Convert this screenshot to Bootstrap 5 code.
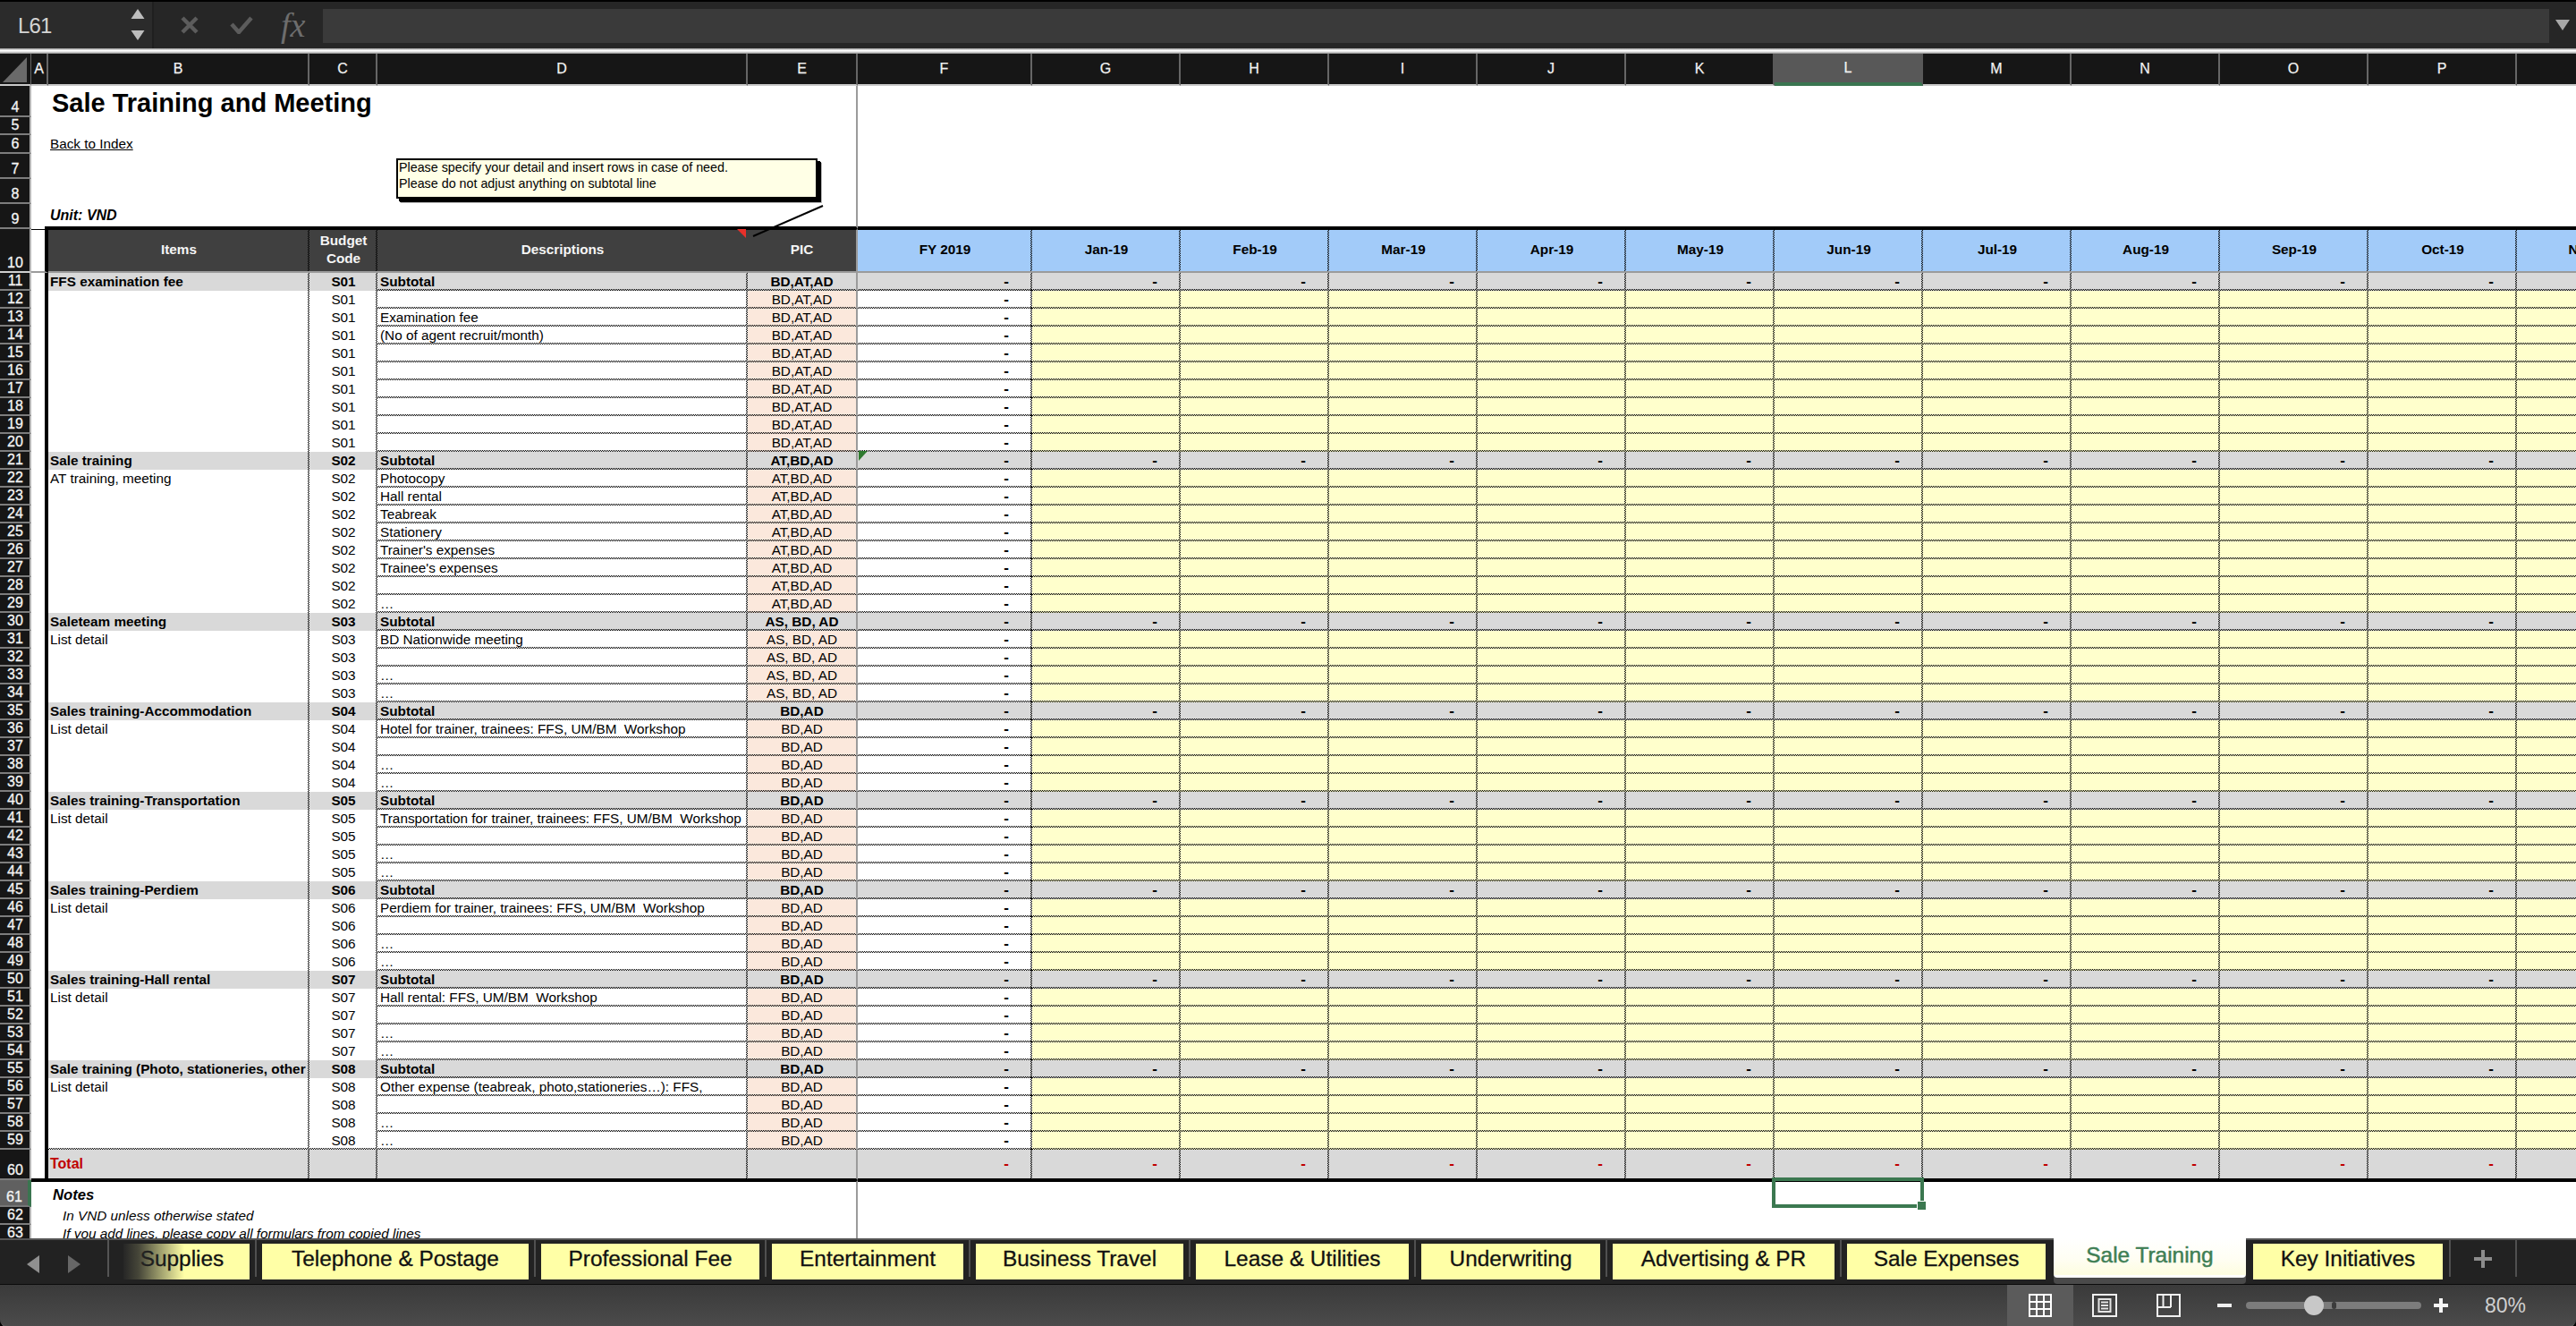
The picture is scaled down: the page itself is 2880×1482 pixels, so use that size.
<!DOCTYPE html>
<html lang="en">
<head>
<meta charset="utf-8">
<title>Sale Training</title>
<link href="https://cdn.jsdelivr.net/npm/bootstrap@5.3.0/dist/css/bootstrap.min.css" rel="stylesheet">
<style>
html,body{height:100%;margin:0;background:#000;overflow:hidden}
.xl-app{width:2880px;height:1482px;display:flex;flex-direction:column;font-family:"Liberation Sans",Arial,sans-serif;position:relative;overflow:hidden}
/* formula bar */
.xl-fbar{flex:0 0 52px;margin-top:2px;background:#262626;display:flex;align-items:stretch}
.xl-name{flex:0 0 170px;display:flex;align-items:center;justify-content:space-between;padding:0 8px 0 20px;background:#2b2b2b;color:#d4d4d4;font-size:24px;font-family:"Liberation Sans",sans-serif;letter-spacing:-.8px}
.xl-name span{padding-top:2px}
.xl-split{flex:0 0 2px;background:#1f1f1f}
.xl-ficons{flex:0 0 189px;display:flex;align-items:center;position:relative}
.xl-ficons svg{display:block}
.xl-fx{font-family:"Liberation Serif",serif;font-style:italic;font-size:38px;color:#6d6d6d;line-height:1}
.xl-finput{flex:1 1 auto;margin:8px 0 6px 0;background:#3a3a3a}
.xl-fdrop{flex:0 0 30px;display:flex;align-items:center;justify-content:center}
.xl-rule{flex:0 0 6px;background:linear-gradient(#8d8d8d,#fff 40%,#e0e0e0 65%,#8a8a8a)}
/* sheet */
.xl-sheet{flex:0 0 1324px;background:#fff;overflow:hidden;position:relative}
.xl-grid{table-layout:fixed;width:2980px;border-collapse:separate;border-spacing:0;font-size:15.3px;line-height:20px;color:#000}
.xl-grid td,.xl-grid th{padding:0;white-space:nowrap;overflow:hidden;vertical-align:bottom;font-weight:400}
.c-r{width:35px}.c-a{width:19px}.c-b{width:292px}.c-c{width:76px}.c-d{width:414px}.c-e{width:123px}.c-f{width:195px}.c-m{width:166px}
.xl-grid thead th{height:36px;background:#161616;color:#f2f2f2;font-size:16px;-webkit-text-stroke:.25px #f2f2f2;text-align:center;vertical-align:middle;border-right:2px solid #666;border-bottom:2px solid #c9c9c9}
.xl-grid thead th.xl-corner{border-right:1px solid #666;background:#161616}
.xl-grid thead th.xl-cur{background:#585858;border-bottom:4px solid #3a7550;border-right-color:#585858}
.xl-grid thead th.xl-prev{border-right-color:#585858}
.xl-grid tbody th{background:#161616;color:#f4f4f4;font-size:16px;-webkit-text-stroke:.3px #f4f4f4;text-align:center;line-height:18px;border-bottom:2px solid #7d7d7d;border-right:2px solid #b5b5b5;padding-left:1px}
.xl-grid tbody th.xl-curr{background:#606060;border-right:4px solid #3a7550;border-bottom-color:#777}
.xl-corner svg{display:block}
.r4{height:35px}.r5,.r6{height:20px}.r7,.r8{height:28px}.r9{height:28px}.r10{height:49px}.r-d{height:20px}.r60{height:34px}.r61{height:30px}
.xl-grid td.xl-pane{border-right:2px solid #9b9b9b}
.xl-grid td.xl-title{font-weight:700;font-size:29px;line-height:32px;padding:0 0 0 4px;overflow:visible}
.xl-grid td.xl-link{padding-left:2px;padding-bottom:1px}
td.xl-link a{color:#000;text-decoration:underline}
.xl-grid td.xl-unit{font-weight:700;font-style:italic;font-size:16px;padding:0 0 2px 2px;vertical-align:bottom}
tr.r9 td{border-bottom:3px solid #000}
tr.r9 td.xl-na{border-bottom:0;background:linear-gradient(#000,#000) right bottom/4px 3px no-repeat}
.xl-grid tr.r10 td{border-top:1px solid #000;border-bottom:2px solid #9b9b9b;text-align:center;vertical-align:middle;font-weight:700;line-height:20px;font-size:15.3px;padding-bottom:2px}
.xl-grid tr.r10 th{border-bottom:2px solid #d0d0d0}
.xl-dk{background-color:#404040;color:#f5f5f5}
.xl-bl{background-color:#a2cbf9}
.xl-grid td.xl-left{border-right:4px solid #000}
/* 1px checkered hair lines */
.xl-v{background-image:repeating-conic-gradient(#000 0 25%,transparent 0 50%);background-size:2px 2px;background-repeat:repeat-y;background-position:right top}
.xl-h{background-image:repeating-conic-gradient(#000 0 25%,transparent 0 50%);background-size:2px 2px;background-repeat:repeat-x;background-position:left bottom}
.xl-vh{background-image:repeating-conic-gradient(#000 0 25%,transparent 0 50%),repeating-conic-gradient(#000 0 25%,transparent 0 50%);background-size:2px 2px,2px 2px;background-repeat:repeat-y,repeat-x;background-position:right top,left bottom}
.f-gr{background-color:#d9d9d9}
.f-ye{background-color:#ffffcc}
.f-pe{background-color:#fbe8dc}
.f-wh{background-color:#fff}
.xl-grid td.t-b{font-weight:700}
.xl-grid td.t-i{padding-left:2px}
.xl-grid td.t-c{text-align:center}
.xl-grid td.t-d{padding-left:3px}
.xl-grid td.t-e{text-align:center}
.xl-grid td.t-n{text-align:right;padding-right:26px;font-weight:700;font-size:17px}
.xl-grid tr.r60 td{vertical-align:middle;border-bottom:2px solid #000}
.xl-grid tr.r61 td{border-top:2px solid #000}
.xl-grid td.xl-total{color:#c00000;font-weight:700;font-size:16px;padding-left:2px}
.xl-grid tr.r60 td.t-n{color:#c00000}
.xl-grid td.xl-notes{font-weight:700;font-style:italic;font-size:16.7px;padding:0 0 3px 5px;overflow:visible}
.xl-grid td.xl-note{font-style:italic;padding:0 0 1px 16px;line-height:19px;overflow:visible;font-size:15.3px}
/* overlays */
.xl-callout{position:absolute;left:443px;top:117px;width:471px;height:45px;background:#ffffe6;border:2px solid #000;box-shadow:3px 3px 0 #000,4px 4px 0 #000,5px 5px 0 #bbb;font-size:14.3px;line-height:18px;padding:0 0 0 1px;color:#000}
.xl-callout div{margin-top:-1px}
.xl-marks{position:absolute;left:0;top:0;width:2880px;height:1324px;pointer-events:none}
.xl-sel{position:absolute;left:1981px;top:1256px;width:170px;height:34px;border:4px solid #3b7850;background:transparent}
.xl-sel::after{content:"";position:absolute;right:-7px;bottom:-7px;width:11px;height:11px;background:#3b7850;border:1px solid #fff}
/* tabs */
.xl-tabs{flex:0 0 52px;background:#222;border-top:2px solid #555;border-bottom:1px solid #0b0b0b;display:flex;align-items:flex-start;position:relative}
.xl-nav{flex:0 0 138px;height:41px;display:flex;align-items:center;position:relative}
.xl-nav::after{content:"";position:absolute;left:120px;top:0;bottom:0;width:2px;background:#555}
.xl-nav svg{position:absolute;top:17px}
.xl-nav .n1{left:29px}.xl-nav .n2{left:75px}
.xl-tab{flex:0 0 auto;height:40px;margin:4px 14px 0 0;background:#ffffa6;color:#111;font-size:24.4px;-webkit-text-stroke:.3px currentColor;line-height:34px;text-align:center;position:relative;white-space:nowrap}
.xl-tab::after{content:"";position:absolute;right:-8px;top:-4px;width:2px;height:41px;background:#505050}
.xl-w1{width:141px;padding-right:10px}.xl-w2{width:298px}.xl-w3{width:244px}.xl-w4{width:214px}.xl-w5{width:232px}.xl-w6{width:238px}.xl-w7{width:200px}.xl-w8{width:248px}.xl-w9{width:222px;margin-right:9px}.xl-w10{width:215px;margin-right:8px}.xl-w11{width:212px;margin-right:7px}
.xl-w9::after,.xl-w11::after,.xl-w10::after{display:none}
.xl-fade::before{content:"";position:absolute;left:0;top:0;bottom:0;width:68px;background:linear-gradient(90deg,#262626 0,rgba(38,38,38,.85) 25%,rgba(38,38,38,0) 100%)}
.xl-active{height:44px;margin-top:-2px;background:linear-gradient(#fff 0,#fffef4 50%,#fdfde0 92%,#fff 93%);color:#3f7f55;line-height:38px;border-radius:0 0 4px 4px;box-shadow:0 7px 0 #4a4a4a;-webkit-text-stroke:.5px currentColor}
.xl-plus{flex:0 0 76px;height:41px;display:flex;align-items:center;justify-content:center;border-left:2px solid #505050;border-right:2px solid #505050}
/* status */
.xl-status{flex:0 0 46px;background:linear-gradient(#3a3a3a,#4b4b4b);border-bottom:2px solid #5a5a5a;border-radius:0 0 9px 9px;display:flex;align-items:center;justify-content:flex-end;color:#d0d0d0}
.xl-viewon{flex:0 0 74px;height:46px;background:#5b5b5b;display:flex;align-items:center;justify-content:center}
.xl-view{flex:0 0 auto;display:block}
.xl-viewpage{margin-left:21px}
.xl-viewbreak{margin-left:44px}
.xl-zoomout{margin-left:41px}
.xl-track{flex:0 0 196px;height:8px;border-radius:4px;background:#7c7c7c;position:relative;margin:0 14px 0 16px}
.xl-track::before{content:"";position:absolute;left:96px;top:0;width:5px;height:8px;border-radius:3px;background:#3c3c3c}
.xl-thumb{position:absolute;left:65px;top:-7px;width:22px;height:22px;border-radius:50%;background:#c8c8c8}
.xl-pct{flex:0 0 auto;width:52px;margin:0 50px 0 41px;font-size:23px;line-height:1;white-space:nowrap}
</style>
</head>
<body>
<div class="xl-app">
  <div class="xl-fbar">
    <div class="xl-name"><span>L61</span>
      <svg width="16" height="36" viewBox="0 0 16 36"><path d="M8 0 15.5 11H.5Z M.5 24H15.5L8 35Z" fill="#bdbdbd"/></svg>
    </div>
    <div class="xl-split"></div>
    <div class="xl-ficons">
      <svg class="position-absolute" style="left:30px;top:16px" width="20" height="20" viewBox="0 0 20 20"><path d="M2 2 18 18M18 2 2 18" stroke="#5c5c5c" stroke-width="4.5"/></svg>
      <svg class="position-absolute" style="left:85px;top:16px" width="26" height="20" viewBox="0 0 26 20"><path d="M2 9 10 18 24 2" fill="none" stroke="#5c5c5c" stroke-width="4.5"/></svg>
      <span class="xl-fx position-absolute" style="left:142px;top:7px">fx</span>
    </div>
    <div class="xl-finput"></div>
    <div class="xl-fdrop"><svg width="16" height="12" viewBox="0 0 16 12"><path d="M0 0H16L8 12Z" fill="#a8a8a8"/></svg></div>
  </div>
  <div class="xl-rule"></div>
  <div class="xl-sheet">
    <table class="xl-grid">
      <colgroup><col class="c-r"><col class="c-a"><col class="c-b"><col class="c-c"><col class="c-d"><col class="c-e"><col class="c-f"><col class="c-m"><col class="c-m"><col class="c-m"><col class="c-m"><col class="c-m"><col class="c-m"><col class="c-m"><col class="c-m"><col class="c-m"><col class="c-m"><col class="c-m"></colgroup>
      <thead><tr>
        <th class="xl-corner"><svg width="34" height="34" viewBox="0 0 34 34"><path d="M30 4V32H3Z" fill="#6a6a6a"/></svg></th>
        <th>A</th><th>B</th><th>C</th><th>D</th><th>E</th><th>F</th><th>G</th><th>H</th><th>I</th><th>J</th><th class="xl-prev">K</th><th class="xl-cur">L</th><th>M</th><th>N</th><th>O</th><th>P</th><th></th>
      </tr></thead>
      <tbody id="rows"></tbody>
    </table>
    <div class="xl-callout"><div>Please specify your detail and insert rows in case of need.<br>Please do not adjust anything on subtotal line</div></div>
    <svg class="xl-marks" viewBox="0 0 2880 1324">
      <path d="M920 170 842 204" stroke="#000" stroke-width="2" fill="none"/>
      <path d="M824 196H834V206Z" fill="#e8302a"/>
      <path d="M960 444H970L960 455Z" fill="#2f7a2f"/>
    </svg>
    <div class="xl-sel"></div>
  </div>
  <div class="xl-tabs">
    <div class="xl-nav">
      <svg class="n1" width="16" height="20" viewBox="0 0 16 20"><path d="M15 0V20L1 10Z" fill="#8f8f8f"/></svg>
      <svg class="n2" width="16" height="20" viewBox="0 0 16 20"><path d="M1 0V20L15 10Z" fill="#676767"/></svg>
    </div>
    <div class="xl-tab xl-w1 xl-fade">Supplies</div>
    <div class="xl-tab xl-w2">Telephone &amp; Postage</div>
    <div class="xl-tab xl-w3">Professional Fee</div>
    <div class="xl-tab xl-w4">Entertainment</div>
    <div class="xl-tab xl-w5">Business Travel</div>
    <div class="xl-tab xl-w6">Lease &amp; Utilities</div>
    <div class="xl-tab xl-w7">Underwriting</div>
    <div class="xl-tab xl-w8">Advertising &amp; PR</div>
    <div class="xl-tab xl-w9">Sale Expenses</div>
    <div class="xl-tab xl-w10 xl-active">Sale Training</div>
    <div class="xl-tab xl-w11">Key Initiatives</div>
    <div class="xl-plus"><svg width="20" height="20" viewBox="0 0 20 20"><path d="M8 0h4v8h8v4h-8v8H8v-8H0V8h8Z" fill="#8c8c8c"/></svg></div>
  </div>
  <div class="xl-status">
    <div class="xl-viewon"><svg class="xl-view" width="26" height="26" viewBox="0 0 26 26"><path d="M1 1H25V25H1ZM9 1V25M17 1V25M1 9H25M1 17H25" fill="none" stroke="#fff" stroke-width="2"/></svg></div>
    <svg class="xl-view xl-viewpage" width="28" height="26" viewBox="0 0 28 26"><path d="M1 1H27V25H1Z" fill="none" stroke="#f0f0f0" stroke-width="2"/><path d="M7.5 6H20.5V20H7.5ZM10 9.5H18M10 13H18M10 16.5H18" fill="none" stroke="#e4e4e4" stroke-width="2"/></svg>
    <svg class="xl-view xl-viewbreak" width="27" height="26" viewBox="0 0 27 26"><path d="M1 1H26V25H1ZM7.5 1V15M16 1V15M1 15H16" fill="none" stroke="#f0f0f0" stroke-width="2"/></svg>
    <svg class="xl-view xl-zoomout" width="16" height="4" viewBox="0 0 16 4"><path d="M0 0H16V4H0Z" fill="#f0f0f0"/></svg>
    <div class="xl-track"><span class="xl-thumb"></span></div>
    <svg class="xl-view" width="16" height="16" viewBox="0 0 16 16"><path d="M6 0h4v6h6v4h-6v6H6v-6H0V6h6Z" fill="#f4f4f4"/></svg>
    <div class="xl-pct">80%</div>
  </div>
</div>
<script>
(function(){
  var tb=document.getElementById('rows'),h='';
  var rest='<td colspan="12"></td>';
  function rh(n,cl){return '<th'+(cl?' class="'+cl+'"':'')+'>'+n+'</th>';}
  function top(n,cls,inner){return '<tr class="'+cls+'">'+rh(n)+inner+'<td class="xl-pane"></td>'+rest+'</tr>';}
  h+=top(4,'r4','<td></td><td class="xl-title" colspan="3">Sale Training and Meeting</td>');
  h+=top(5,'r5','<td colspan="4"></td>');
  h+=top(6,'r6','<td></td><td class="xl-link" colspan="3"><a href="#">Back to Index</a></td>');
  h+=top(7,'r7','<td colspan="4"></td>');
  h+=top(8,'r8','<td colspan="4"></td>');
  h+=top(9,'r9','<td class="xl-na"></td><td class="xl-unit">Unit: VND</td><td></td><td></td>');
  var mons=['Jan-19','Feb-19','Mar-19','Apr-19','May-19','Jun-19','Jul-19','Aug-19','Sep-19','Oct-19','Nov-19'];
  h+='<tr class="r10">'+rh(10)+'<td class="xl-left"></td><td class="xl-dk xl-v">Items</td><td class="xl-dk xl-v">Budget<br>Code</td><td class="xl-dk">Descriptions</td><td class="xl-dk xl-pane">PIC</td><td class="xl-bl xl-v">FY 2019</td>';
  mons.forEach(function(m){h+='<td class="xl-bl xl-v">'+m+'</td>';});
  h+='</tr>';
  var U='UM/BM\u00a0 Workshop';
  var blocks=[
   ['FFS examination fee','S01','BD,AT,AD','',['','Examination fee','(No of agent recruit/month)','','','','','','']],
   ['Sale training','S02','AT,BD,AD','AT training, meeting',['Photocopy','Hall rental','Teabreak','Stationery',"Trainer's expenses","Trainee's expenses",'','\u2026']],
   ['Saleteam meeting','S03','AS, BD, AD','List detail',['BD Nationwide meeting','','\u2026','\u2026']],
   ['Sales training-Accommodation','S04','BD,AD','List detail',['Hotel for trainer, trainees: FFS, '+U,'','\u2026','\u2026']],
   ['Sales training-Transportation','S05','BD,AD','List detail',['Transportation for trainer, trainees: FFS, '+U,'','\u2026','\u2026']],
   ['Sales training-Perdiem','S06','BD,AD','List detail',['Perdiem for trainer, trainees: FFS, '+U,'','\u2026','\u2026']],
   ['Sales training-Hall rental','S07','BD,AD','List detail',['Hall rental: FFS, '+U,'','\u2026','\u2026']],
   ['Sale training (Photo, stationeries, other','S08','BD,AD','List detail',['Other expense (teabreak, photo,stationeries\u2026): FFS,','','\u2026','\u2026']]
  ];
  var n=11,m;
  blocks.forEach(function(bk,bi){
    var s='<tr class="r-d">'+rh(n++)+'<td class="xl-left"></td>';
    s+='<td class="t-i t-b f-gr xl-v">'+bk[0]+'</td><td class="t-c t-b f-gr xl-v">'+bk[1]+'</td>';
    s+='<td class="t-d t-b f-gr xl-vh">Subtotal</td><td class="t-e t-b f-gr xl-h xl-pane">'+bk[2]+'</td>';
    s+='<td class="t-n f-gr xl-vh">-</td>';
    for(m=0;m<10;m++){s+='<td class="t-n f-gr xl-vh">-</td>';}
    s+='<td class="f-gr xl-vh"></td>';
    h+=s+'</tr>';
    bk[4].forEach(function(d,i){
      var last=(bi===blocks.length-1&&i===bk[4].length-1);
      var t='<tr class="r-d">'+rh(n++)+'<td class="xl-left"></td>';
      t+='<td class="t-i '+(last?'xl-vh':'xl-v')+'">'+(i===0?bk[3]:'')+'</td><td class="t-c '+(last?'xl-vh':'xl-v')+'">'+bk[1]+'</td>';
      t+='<td class="t-d xl-vh">'+d+'</td><td class="t-e f-pe xl-h xl-pane">'+bk[2]+'</td>';
      t+='<td class="t-n f-wh xl-vh">-</td>';
      for(m=0;m<11;m++){t+='<td class="f-ye xl-vh"></td>';}
      h+=t+'</tr>';
    });
  });
  var s='<tr class="r60">'+rh(60)+'<td class="xl-left"></td><td class="xl-total f-gr xl-v">Total</td><td class="f-gr xl-v"></td><td class="f-gr xl-v"></td><td class="f-gr xl-pane"></td><td class="t-n f-gr xl-v">-</td>';
  for(m=0;m<10;m++){s+='<td class="t-n f-gr xl-v">-</td>';}
  s+='<td class="f-gr xl-v"></td>';
  h+=s+'</tr>';
  h+='<tr class="r61">'+rh(61,'xl-curr')+'<td></td><td class="xl-notes" colspan="3">Notes</td><td class="xl-pane"></td>'+rest+'</tr>';
  h+='<tr class="r-d">'+rh(62)+'<td></td><td class="xl-note" colspan="3">In VND unless otherwise stated</td><td class="xl-pane"></td>'+rest+'</tr>';
  h+='<tr class="r-d">'+rh(63)+'<td></td><td class="xl-note" colspan="3">If you add lines, please copy all formulars from copied lines</td><td class="xl-pane"></td>'+rest+'</tr>';
  tb.innerHTML=h;
})();
</script>
<script src="https://cdn.jsdelivr.net/npm/bootstrap@5.3.0/dist/js/bootstrap.bundle.min.js"></script>
</body>
</html>
